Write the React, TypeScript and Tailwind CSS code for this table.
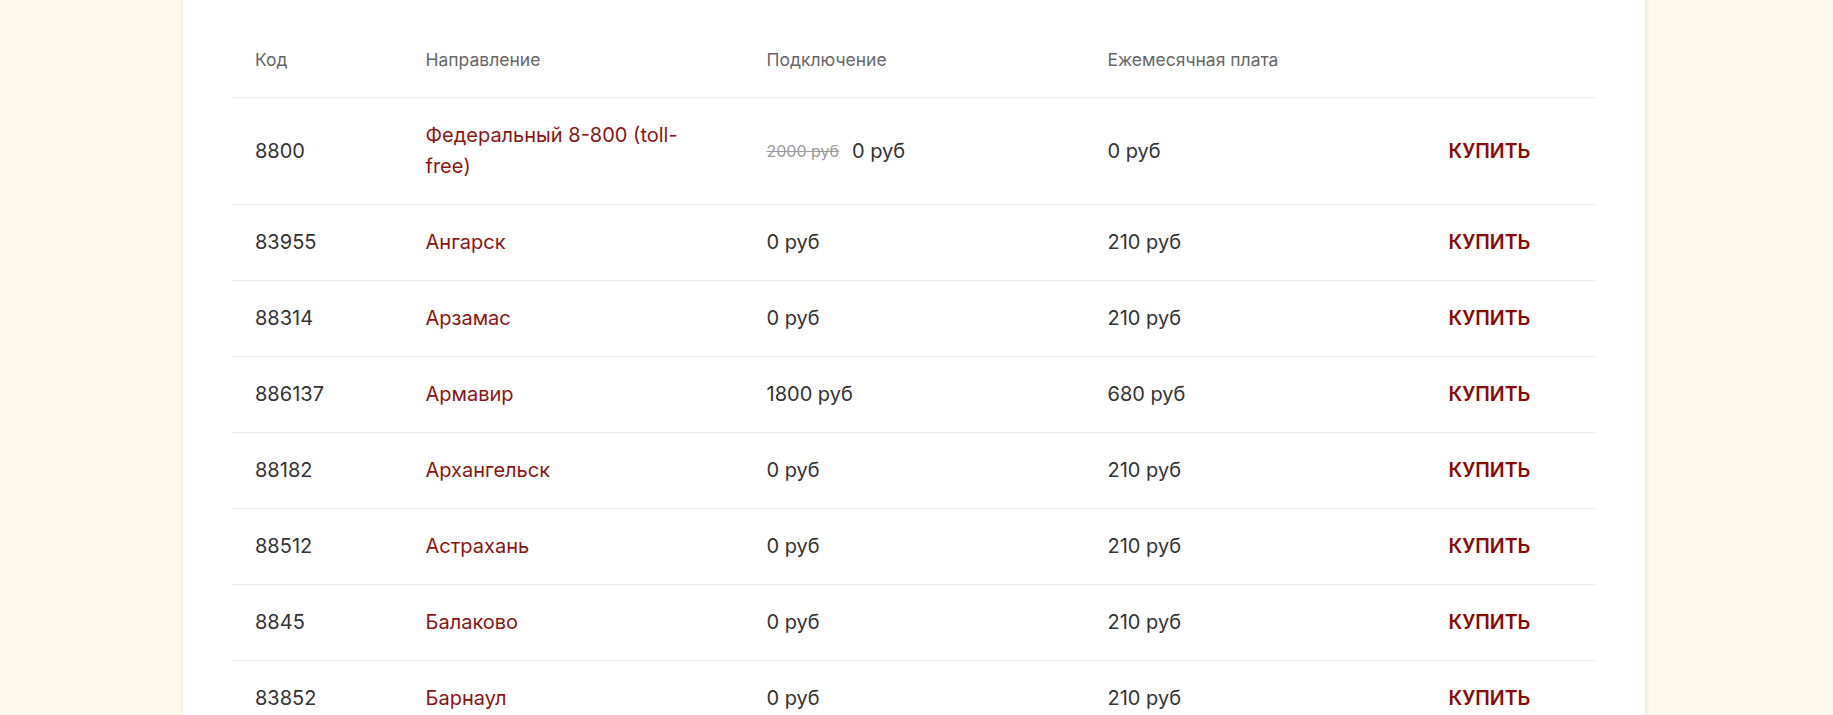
import React from "react";

type Row = {
  code: string;
  city: React.ReactNode;
  oldPrice?: string;
  connect: string;
  monthly: string;
};

const rows: Row[] = [
  {
    code: "8800",
    city: (
      <>
        Федеральный 8-800 (toll-
        <br />
        free)
      </>
    ),
    oldPrice: "2000 руб",
    connect: "0 руб",
    monthly: "0 руб",
  },
  { code: "83955", city: "Ангарск", connect: "0 руб", monthly: "210 руб" },
  { code: "88314", city: "Арзамас", connect: "0 руб", monthly: "210 руб" },
  { code: "886137", city: "Армавир", connect: "1800 руб", monthly: "680 руб" },
  { code: "88182", city: "Архангельск", connect: "0 руб", monthly: "210 руб" },
  { code: "88512", city: "Астрахань", connect: "0 руб", monthly: "210 руб" },
  { code: "8845", city: "Балаково", connect: "0 руб", monthly: "210 руб" },
  { code: "83852", city: "Барнаул", connect: "0 руб", monthly: "210 руб" },
  { code: "84722", city: "Белгород", connect: "0 руб", monthly: "210 руб" },
];

const cols = "grid grid-cols-[1fr_2fr_2fr_2fr_1fr]";
const cell = "px-[23px] py-[22px]";

export default function App() {
  return (
    <div
      className="h-[715px] overflow-hidden bg-[#fdf8ec]"
      style={{ fontFamily: "Inter, 'Noto Sans', sans-serif" }}
    >
      <div className="ml-[183px] w-[1462px] min-h-[715px] bg-white px-[49px] pt-[22px] shadow-[0_0_4px_rgba(200,180,140,0.35)]">
        <div className={`${cols} border-b border-[#ededed] text-[17.5px] leading-[31px] text-[#666666]`}>
          <div className={cell}>Код</div>
          <div className={cell}>Направление</div>
          <div className={cell}>Подключение</div>
          <div className={cell}>Ежемесячная плата</div>
          <div className={cell}></div>
        </div>
        {rows.map((r) => (
          <div
            key={r.code}
            className={`${cols} items-center border-b border-[#ededed] text-[20px] leading-[31px] text-[#333333]`}
          >
            <div className={cell}>{r.code}</div>
            <div className={`${cell} text-[#8b1414]`}>
              <a href="#">{r.city}</a>
            </div>
            <div className={`flex items-center gap-[13px] ${cell}`}>
              {r.oldPrice && (
                <span className="text-[16px] text-[#9a9a9a] line-through">{r.oldPrice}</span>
              )}
              <span>{r.connect}</span>
            </div>
            <div className={cell}>{r.monthly}</div>
            <div className={cell}>
              <a href="#" className="text-[19.5px] font-semibold text-[#8a0808]">
                КУПИТЬ
              </a>
            </div>
          </div>
        ))}
      </div>
    </div>
  );
}
